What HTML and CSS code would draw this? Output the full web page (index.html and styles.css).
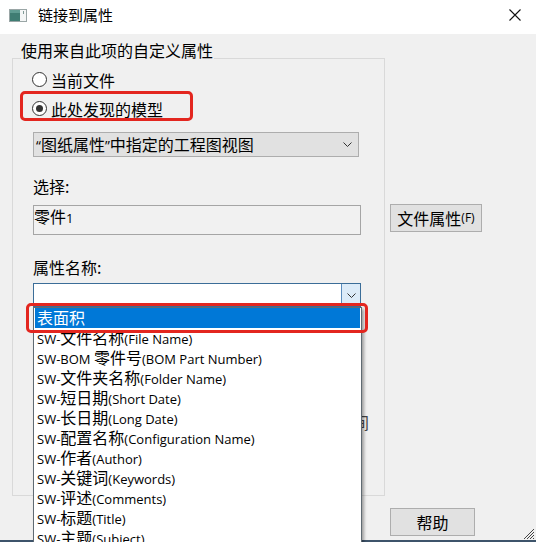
FILE: index.html
```html
<!DOCTYPE html>
<html lang="zh-CN">
<head>
<meta charset="utf-8">
<title>链接到属性</title>
<link rel="stylesheet" href="styles.css">
</head>
<body>
<div class="window">
  <div class="titlebar">
    <svg class="app-icon" width="18" height="13" viewBox="0 0 18 13">
      <rect x="0.5" y="0.5" width="17" height="12" fill="#f4f6f6" stroke="#9aa6a6"/>
      <rect x="1" y="1" width="10" height="11" fill="#3f7d73"/>
      <rect x="1" y="1" width="10" height="3" fill="#5f9c92"/>
      <rect x="14" y="2" width="1" height="3" fill="#7f9a96"/>
    </svg>
    <span class="title">链接到属性</span>
    <svg class="close" width="12" height="12" viewBox="0 0 12 12">
      <path d="M0.5 0.5 L11.5 11.5 M11.5 0.5 L0.5 11.5" stroke="#111" stroke-width="1.1" fill="none"/>
    </svg>
  </div>
  <div class="content">
    <div class="group">
      <span class="group-title">使用来自此项的自定义属性</span>
      <div class="radio"><span class="dot"></span>当前文件</div>
      <div class="radio checked"><span class="dot"></span>此处发现的模型</div>
      <div class="select">
        <span><span class="l q">“</span>图纸属性<span class="l q">”</span>中指定的工程图视图</span>
        <svg class="chev" width="9" height="5" viewBox="0 0 9 5"><path d="M0.5 0.5 L4.5 4.5 L8.5 0.5" stroke="#333" fill="none"/></svg>
      </div>
      <div class="label first">选择:</div>
      <div class="textbox">零件<span class="l">1</span></div>
      <div class="label second">属性名称:</div>
      <div class="combo-wrap">
        <div class="combo">
          <div class="combo-btn">
            <svg width="9" height="5" viewBox="0 0 9 5"><path d="M0.5 0.5 L4.5 4.5 L8.5 0.5" stroke="#333" fill="none"/></svg>
          </div>
        </div>
        <div class="list">
          <div class="row sel">表面积</div>
          <div class="row"><span class="l">SW-</span>文件名称<span class="l">(File Name)</span></div>
          <div class="row"><span class="l">SW-BOM </span>零件号<span class="l">(BOM Part Number)</span></div>
          <div class="row"><span class="l">SW-</span>文件夹名称<span class="l">(Folder Name)</span></div>
          <div class="row"><span class="l">SW-</span>短日期<span class="l">(Short Date)</span></div>
          <div class="row"><span class="l">SW-</span>长日期<span class="l">(Long Date)</span></div>
          <div class="row"><span class="l">SW-</span>配置名称<span class="l">(Configuration Name)</span></div>
          <div class="row"><span class="l">SW-</span>作者<span class="l">(Author)</span></div>
          <div class="row"><span class="l">SW-</span>关键词<span class="l">(Keywords)</span></div>
          <div class="row"><span class="l">SW-</span>评述<span class="l">(Comments)</span></div>
          <div class="row"><span class="l">SW-</span>标题<span class="l">(Title)</span></div>
          <div class="row"><span class="l">SW-</span>主题<span class="l">(Subject)</span></div>
        </div>
      </div>
      <span class="hidden-glyph">间</span>
    </div>
    <div class="side">
      <div class="btn btn-file">文件属性<span class="l small">(F)</span></div>
      <div class="btn btn-help">帮助</div>
    </div>
  </div>
  <div class="mark mark-radio"></div>
  <div class="mark mark-row"></div>
  <svg class="grip" width="14" height="14" viewBox="0 0 14 14">
    <path d="M13 3 L3 13 M13 6 L6 13 M13 9 L9 13 M13 12 L12 13" stroke="#444" stroke-width="1" fill="none"/>
  </svg>
</div>
</body>
</html>
```
FILE: styles.css
```css
* { box-sizing: border-box; }
html, body { margin: 0; padding: 0; }
body {
  width: 536px;
  height: 542px;
  overflow: hidden;
  background: #3e546b;
  font-family: "Noto Sans CJK SC", sans-serif;
  font-size: 16px;
  color: #000;
}
.l {
  font-family: "Open Sans", "Noto Sans", sans-serif;
  font-size: 13px;
}
.q { font-size: 14px; }
.small { font-size: 12px; }

.window {
  position: relative;
  width: 536px;
  height: 540px;
  background: #f0f0f0;
}
.titlebar {
  height: 34px;
  background: #fff;
  display: flex;
  align-items: flex-start;
  padding-left: 9px;
}
.app-icon { margin-top: 9px; }
.title {
  font-size: 15px;
  line-height: 20px;
  margin-top: 5px;
  margin-left: 11px;
}
.close {
  margin-left: auto;
  margin-right: 15px;
  margin-top: 9px;
}

.content {
  display: flex;
  padding: 24px 0 0 12px;
}
.group {
  position: relative;
  width: 373px;
  height: 438px;
  border: 1px solid #d9d9d9;
  padding: 6px 0 0 20px;
}
.group-title {
  position: absolute;
  top: -19px;
  left: 8px;
  line-height: 20px;
  padding-right: 1px;
  background: #f0f0f0;
}
.radio {
  height: 29px;
  display: flex;
  align-items: center;
  line-height: 20px;
}
.dot {
  width: 15px;
  height: 15px;
  margin-left: -1px;
  margin-right: 4px;
  border: 1px solid #333;
  border-radius: 50%;
  background: #fff;
  display: flex;
  align-items: center;
  justify-content: center;
}
.checked .dot::after {
  content: "";
  width: 7px;
  height: 7px;
  border-radius: 50%;
  background: #333;
}
.select {
  margin-top: 9px;
  width: 326px;
  height: 25px;
  border: 1px solid #adadad;
  background: #e1e1e1;
  display: flex;
  align-items: center;
  justify-content: space-between;
  padding: 0 6px 0 2px;
  line-height: 20px;
}
.label {
  line-height: 20px;
}
.label.first { margin-top: 19px; }
.label.second { margin-top: 22px; }
.textbox {
  margin-top: 9px;
  width: 328px;
  height: 30px;
  border: 1px solid #a5a5a5;
  background: #f1f1f1;
  line-height: 20px;
  padding-left: 0;
}
.combo-wrap {
  position: relative;
  margin-top: 6px;
  width: 328px;
}
.combo {
  height: 24px;
  border: 1px solid #3b6d98;
  background: #fff;
  display: flex;
  justify-content: flex-end;
}
.combo-btn {
  width: 19px;
  height: 100%;
  background: #dcebf8;
  border-left: 1px solid #5a8cbd;
  display: flex;
  align-items: center;
  justify-content: center;
}
.list {
  position: absolute;
  top: 24px;
  left: 0;
  width: 329px;
  height: 260px;
  background: #fff;
  border: 1px solid #5f6a72;
  box-shadow: 2px 2px 3px rgba(0,0,0,0.35);
  z-index: 3;
  padding-left: 1px;
}
.row {
  height: 20px;
  line-height: 19px;
  padding-left: 2px;
  white-space: nowrap;
}
.row.sel {
  background: #0078d7;
  color: #fff;
  margin-right: 1px;
}
.hidden-glyph {
  position: absolute;
  left: 340px;
  top: 353px;
  line-height: 20px;
  color: #444;
  z-index: 1;
}
.side {
  display: flex;
  flex-direction: column;
  margin-left: 5px;
}
.btn {
  height: 28px;
  background: #e1e1e1;
  border: 1px solid #adadad;
  display: flex;
  align-items: center;
  justify-content: center;
  line-height: 20px;
}
.btn-file { width: 92px; margin-top: 146px; }
.btn-help { width: 85px; margin-top: 276px; }

.mark {
  position: absolute;
  border: 3px solid #e3261f;
  border-radius: 5px;
  z-index: 5;
}
.mark-radio { left: 20px; top: 91px; width: 173px; height: 30px; }
.mark-row { left: 26px; top: 303px; width: 342px; height: 30px; }
.grip {
  position: absolute;
  right: 1px;
  bottom: 0;
}
```
